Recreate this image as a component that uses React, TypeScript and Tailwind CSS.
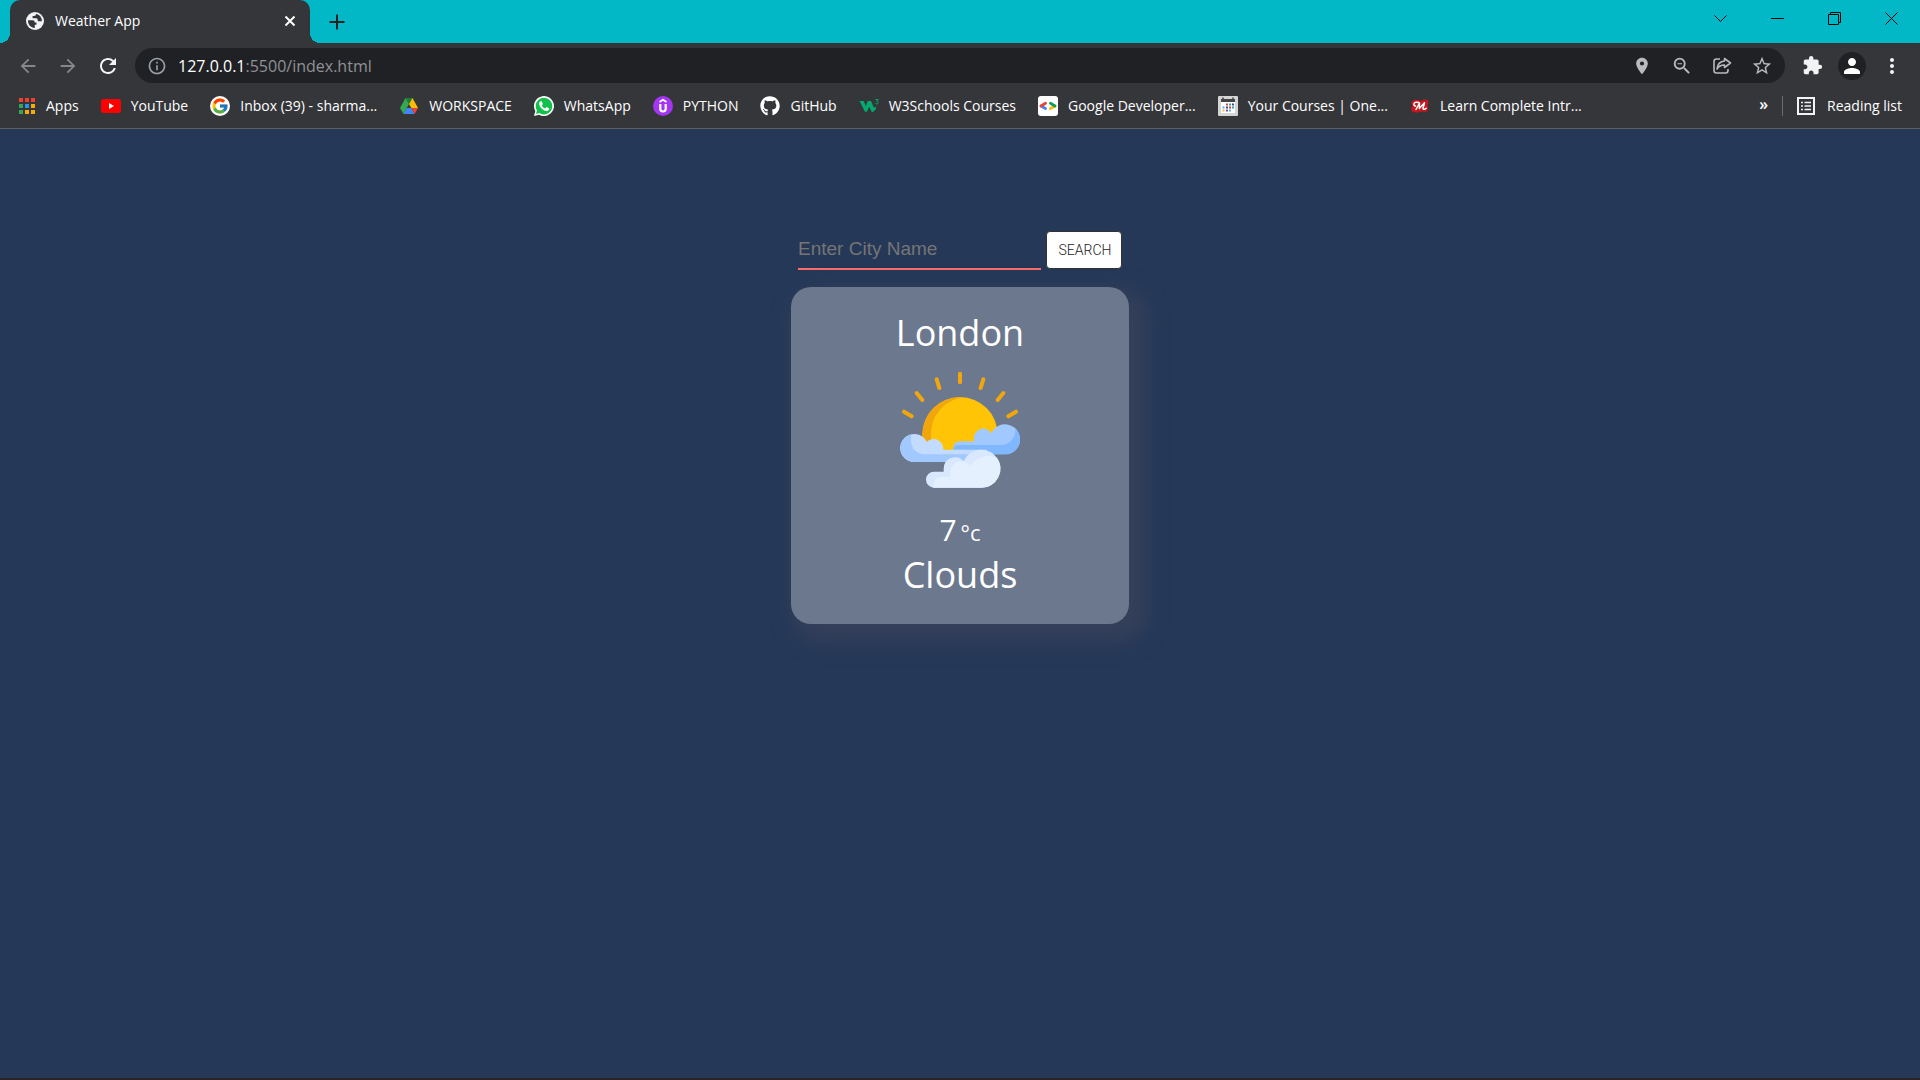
import type { ReactNode } from 'react'
import { FcGoogle } from 'react-icons/fc'
import { FaGithub } from 'react-icons/fa'
import {
  MdArrowBack,
  MdArrowForward,
  MdExtension,
  MdInfoOutline,
  MdLocationOn,
  MdMoreVert,
  MdPerson,
  MdRefresh,
  MdStarBorder,
  MdZoomOut,
} from 'react-icons/md'

const appColors = [
  '#ea4335', '#ea4335', '#ea4335',
  '#34a853', '#2196f3', '#f9ab00',
  '#34a853', '#f9ab00', '#f9ab00',
]

function GlobeIcon() {
  return (
    <svg viewBox="0 0 18 18" className="size-[18px]">
      <circle cx="9" cy="9" r="9" fill="#f1f3f4" />
      <path
        d="M2 8.2h4.5c1.6 0 2.2.9 2.2 2.3h1.8v2.3H8.8V16C4.8 15.7 1.8 12.6 2 8.2Z"
        fill="#35363a"
      />
      <path
        d="M10 2.1c0 1.2-.7 2-2 2H6.6v2.2h3.7c1 0 1.3.7 1.3 1.7 0 .8.6 1.3 1.4 1.3h2.9C16 5.5 13.5 2.6 10 2.1Z"
        fill="#35363a"
      />
    </svg>
  )
}

function AppsIcon() {
  return (
    <svg viewBox="0 0 18 18" className="size-[18px]">
      {appColors.map((color, i) => (
        <rect
          key={i}
          x={1 + (i % 3) * 6}
          y={1 + Math.floor(i / 3) * 6}
          width="4"
          height="4"
          fill={color}
        />
      ))}
    </svg>
  )
}

function YouTubeIcon() {
  return (
    <svg viewBox="0 0 20 20" className="size-5">
      <rect y="3" width="20" height="14" rx="3" fill="#f00" />
      <path d="M8 7v6l5-3Z" fill="#fff" />
    </svg>
  )
}

function GoogleIcon() {
  return (
    <span className="flex size-5 items-center justify-center rounded-full bg-white">
      <FcGoogle size={18} />
    </span>
  )
}

function DriveIcon() {
  return (
    <svg viewBox="0 0 20 20" className="size-5">
      <path d="M6.5 2h7L10 8Z" fill="#188038" />
      <path d="M13.5 2 19 12h-6.7L10 8Z" fill="#fbbc04" />
      <path d="M6.5 2 10 8 4.5 18 1 12Z" fill="#34a853" />
      <path d="M7.7 12h4.6l3.2 6h-11Z" fill="#4285f4" />
      <path d="M12.3 12H19l-3.5 6Z" fill="#ea4335" />
    </svg>
  )
}

function WhatsAppIcon() {
  return (
    <svg viewBox="0 0 20 20" className="size-5">
      <path d="M0 20 1.3 15A10 10 0 1 1 5 18.7Z" fill="#fff" />
      <path d="M2 18 3 14.6A8.3 8.3 0 1 1 5.5 17.1Z" fill="#12c04b" />
      <path
        d="M6.6 5.3c-1.2.6-1.9 2-1.3 3.6 1 2.9 3.6 5.3 6.6 6.1 1.5.3 3.1-.5 3.3-2l-.1-.8-2.6-1.2-1.3 1.5c-1.5-.6-2.7-1.7-3.4-3.1l1.1-1.4-1.2-2.7Z"
        fill="#fff"
      />
    </svg>
  )
}

function UdemyIcon() {
  return (
    <svg viewBox="0 0 20 20" className="size-5">
      <circle cx="10" cy="10" r="10" fill="#a435f0" />
      <path d="M6.5 6 10 3.8 13.5 6" fill="none" stroke="#fff" strokeWidth="1.6" />
      <path d="M7.3 8v4.8a2.7 2.7 0 0 0 5.4 0V8" fill="none" stroke="#fff" strokeWidth="2.2" />
    </svg>
  )
}

function W3Icon() {
  return (
    <svg viewBox="0 0 20 20" className="size-5">
      <path
        d="M.5 5h4.2l2.1 5 2-5H12l3 7 1.3-1.5 1 2-3.2 3.5-1.5-.3-2.3-5-2.5 5H6Z"
        fill="#04aa6d"
      />
      <path
        d="M16.5 3.5h2.7l-1.5 1.9c2 0 1.8 2.6 0 2.6-.7 0-1.2-.3-1.3-.9"
        fill="none"
        stroke="#04aa6d"
      />
    </svg>
  )
}

function DevelopersIcon() {
  return (
    <svg viewBox="0 0 20 20" className="size-5">
      <rect width="20" height="20" rx="3" fill="#fff" />
      <g fill="none" strokeWidth="2.8" strokeLinecap="round">
        <path d="M3 10 7.5 12.5" stroke="#4285f4" />
        <path d="M3 10 7.5 7.3" stroke="#ea4335" />
        <path d="M17 10 12.5 12.5" stroke="#fbbc04" />
        <path d="M17 10 12.5 7.3" stroke="#0f9d58" />
      </g>
    </svg>
  )
}

function CalendarIcon() {
  return (
    <svg viewBox="0 0 20 20" className="size-5">
      <rect width="20" height="20" rx="1" fill="#d4d4d4" />
      <rect x="3" y="3" width="14" height="14" fill="#fff" />
      <path d="M3 3h14v3H3Z" fill="#444" />
      <path d="M5 1.5V4M15 1.5V4" stroke="#444" strokeWidth="1.5" />
      <path d="M8 8.5h2M11 11.5h2" stroke="#e0433a" strokeWidth="2" />
      <path d="M11 8.5h2M14 11.5h2" stroke="#2a9db5" strokeWidth="2" />
      <path d="M14 8.5h2M8 11.5h2" stroke="#34508c" strokeWidth="2" />
      <path d="M4.5 11.5h2M11 14.5h2" stroke="#4bb4e6" strokeWidth="2" />
      <path d="M4.5 14.5h2" stroke="#f2b632" strokeWidth="2" />
      <path d="M8 14.5h2" stroke="#8e44ad" strokeWidth="2" />
    </svg>
  )
}

function MasterIcon() {
  return (
    <svg viewBox="0 0 20 20" className="size-5">
      <path
        d="M4 4h5l2 1 3-1.5 3.5.5 1.2 2-1.2 3 .8 4-2 3-3.5-.5L10 16l-3.5.7L2 15.5l-1-3 1.5-3L1 7Z"
        fill="#c4161c"
      />
      <path
        d="M5.5 10C3 9.5 3.5 6.5 6 6.3c1.5-.1 3 .2 3.5.7L6 13.5M9.5 7 9.3 12.5 14.5 6.8 13 12.3c0 1.4 1.8 1.3 3.2 0"
        fill="none"
        stroke="#fff"
        strokeWidth="1.5"
        strokeLinecap="round"
        strokeLinejoin="round"
      />
    </svg>
  )
}

function ShareIcon() {
  return (
    <svg
      viewBox="0 0 20 20"
      className="size-5"
      fill="none"
      stroke="currentColor"
      strokeWidth="1.6"
      strokeLinejoin="round"
    >
      <path d="M8 3H4.5A2.5 2.5 0 0 0 2 5.5v9A2.5 2.5 0 0 0 4.5 17h9a2.5 2.5 0 0 0 2.5-2.5V13" />
      <path d="M12.5 2.5 18.5 7l-6 4.5V9C9 9 6.8 10 5 13c.4-4.5 3-7.5 7.5-8Z" />
    </svg>
  )
}

function ReadingListIcon() {
  return (
    <svg viewBox="0 0 18 18" className="size-[18px]" fill="none" stroke="#f1f3f4">
      <rect x="1" y="1" width="16" height="16" strokeWidth="2" />
      <path
        d="M4 5.5h2M4 9h2M4 12.5h2M7.5 5.5H14M7.5 9H14M7.5 12.5H14"
        strokeWidth="1.5"
      />
    </svg>
  )
}

const bookmarks = [
  { label: 'Apps', icon: <AppsIcon /> },
  { label: 'YouTube', icon: <YouTubeIcon /> },
  { label: 'Inbox (39) - sharma...', icon: <GoogleIcon /> },
  { label: 'WORKSPACE', icon: <DriveIcon /> },
  { label: 'WhatsApp', icon: <WhatsAppIcon /> },
  { label: 'PYTHON', icon: <UdemyIcon /> },
  { label: 'GitHub', icon: <FaGithub size={20} /> },
  { label: 'W3Schools Courses', icon: <W3Icon /> },
  { label: 'Google Developer...', icon: <DevelopersIcon /> },
  { label: 'Your Courses | One...', icon: <CalendarIcon /> },
  { label: 'Learn Complete Intr...', icon: <MasterIcon /> },
]

const windowButtons = [
  { label: 'Search tabs', path: 'M.5 3.5l6 6 6-6' },
  { label: 'Minimize', path: 'M0 6.5h13' },
  { label: 'Restore', path: 'M.5 2.5h10v10H.5ZM2.5 2.5v-2h10v10h-2' },
  { label: 'Close', path: 'M.5.5l12 12M12.5.5l-12 12' },
]

function IconButton({ label, className = '', children }: {
  label: string
  className?: string
  children: ReactNode
}) {
  return (
    <button
      type="button"
      aria-label={label}
      className={`flex h-9 w-10 shrink-0 items-center justify-center ${className}`}
    >
      {children}
    </button>
  )
}

function TitleBar() {
  return (
    <div className="flex h-[43px] items-end justify-between bg-[#02b8c6]">
      <div className="flex items-end">
        <span className="size-2.5 bg-[radial-gradient(circle_at_top_left,transparent_10px,#35363a_10px)]" />
        <div className="flex h-[43px] w-[300px] items-center gap-[11px] rounded-t-[10px] bg-[#35363a] pb-0.5 pl-4 pr-3 text-sm text-white">
          <GlobeIcon />
          <span className="flex-1">Weather App</span>
          <button type="button" aria-label="Close tab">
            <svg viewBox="0 0 16 16" className="size-4" stroke="currentColor" strokeWidth="2">
              <path d="M3.5 3.5l9 9M12.5 3.5l-9 9" />
            </svg>
          </button>
        </div>
        <span className="size-2.5 bg-[radial-gradient(circle_at_top_right,transparent_10px,#35363a_10px)]" />
        <button
          type="button"
          aria-label="New tab"
          className="flex h-[43px] w-[34px] items-center justify-center text-[#202124]"
        >
          <svg viewBox="0 0 16 16" className="size-4" stroke="currentColor" strokeWidth="2">
            <path d="M8 .5v15M.5 8h15" />
          </svg>
        </button>
      </div>
      <div className="flex self-start">
        {windowButtons.map(({ label, path }) => (
          <button
            key={label}
            type="button"
            aria-label={label}
            className="flex h-[37px] w-[57px] items-center justify-center text-black"
          >
            <svg viewBox="0 0 13 13" className="size-[13px]" fill="none" stroke="currentColor">
              <path d={path} />
            </svg>
          </button>
        ))}
      </div>
    </div>
  )
}

function Toolbar() {
  return (
    <div className="flex h-[45px] items-center px-2 text-[#f1f3f4]">
      <IconButton label="Back" className="text-[#86878a]">
        <MdArrowBack size={22} />
      </IconButton>
      <IconButton label="Forward" className="text-[#86878a]">
        <MdArrowForward size={22} />
      </IconButton>
      <IconButton label="Reload">
        <MdRefresh size={24} />
      </IconButton>
      <div className="mx-[7px] flex h-[35px] flex-1 items-center rounded-full bg-[#202124] pl-3 pr-[3px] text-[#b9babc]">
        <MdInfoOutline size={20} className="text-[#9aa0a6]" />
        <p className="ml-[11px] flex-1 text-base text-[#8f9296]">
          <span className="text-white">127.0.0.1</span>:5500/index.html
        </p>
        <IconButton label="Location">
          <MdLocationOn size={20} />
        </IconButton>
        <IconButton label="Zoom out">
          <MdZoomOut size={22} />
        </IconButton>
        <IconButton label="Share">
          <ShareIcon />
        </IconButton>
        <IconButton label="Bookmark this tab">
          <MdStarBorder size={22} />
        </IconButton>
      </div>
      <IconButton label="Extensions">
        <MdExtension size={21} />
      </IconButton>
      <IconButton label="Profile">
        <span className="flex size-7 items-center justify-center rounded-full bg-[#202124] text-white">
          <MdPerson size={24} />
        </span>
      </IconButton>
      <IconButton label="Menu">
        <MdMoreVert size={24} />
      </IconButton>
    </div>
  )
}

function BookmarksBar() {
  return (
    <nav className="flex h-9 items-center px-[18px] text-sm text-white">
      <ul className="flex flex-1 items-center gap-[22px]">
        {bookmarks.map(({ label, icon }) => (
          <li key={label}>
            <a href="#" className="flex items-center gap-2.5 whitespace-nowrap">
              {icon}
              {label}
            </a>
          </li>
        ))}
      </ul>
      <button type="button" aria-label="More bookmarks" className="mr-3.5 pb-1 text-base leading-5 font-semibold">
        »
      </button>
      <span className="mr-3.5 h-5 w-px bg-[#6b6c6f]" />
      <button type="button" className="flex items-center gap-3">
        <ReadingListIcon />
        Reading list
      </button>
    </nav>
  )
}

function PartlyCloudyIcon() {
  return (
    <svg viewBox="360 60 360 360" className="size-[120px]">
      <g stroke="#f0a60c" strokeWidth="12" strokeLinecap="round">
        <path d="M540 71v26M470 88l8 26M610 88l-8 26M410 129l17 21M670 129l-17 21M372 185l23 14M708 185l-23 14" />
      </g>
      <path d="M427 254a113 113 0 0 1 226 0l-20 50H440Z" fill="#ffc405" />
      <path d="M552 142C500 148 453 190 453 254V285H430C414 215 462 136 552 142Z" fill="#f0a60c" />
      {/* right cloud */}
      <path
        d="M520 300V292Q522 274 540 274H582V268A28 28 0 0 1 634 250A45 45 0 1 1 675 313H520Z"
        fill="#a1c9ff"
      />
      <path
        d="M520 300C520 290 525 285 535 285H662C692 285 710 258 705 234A45 45 0 0 1 675 313H520Z"
        fill="#80b8ff"
      />
      {/* left cloud */}
      <path
        d="M402 336A42 42 0 1 1 440 275C462 257 490 270 490 299H620V336Z"
        fill="#c3dbff"
      />
      <path
        d="M402 336A42 42 0 0 1 394 253C388 292 405 313 440 313H600V336Z"
        fill="#a1c9ff"
      />
      {/* front cloud */}
      <path
        d="M462 413A24 24 0 0 1 462 365H491V357A34 34 0 0 1 551 334A57 57 0 1 1 605 413Z"
        fill="#dae8ff"
      />
      <path
        d="M459 413C459 395 468 381 485 381H511V375A34 34 0 0 1 571 347C588 322 620 310 651 323A57 57 0 0 1 605 413Z"
        fill="#e5f0ff"
      />
    </svg>
  )
}

export default function App() {
  return (
    <div className="flex min-h-screen flex-col bg-[#253858] font-['Open_Sans','Noto_Sans',sans-serif]">
      <header className="border-b border-[#5f6063] bg-[#35363a] pb-1">
        <TitleBar />
        <Toolbar />
        <BookmarksBar />
      </header>

      <main className="flex flex-1 flex-col items-center border-b-2 border-[#2a2223] pt-[102px] text-white">
        <form className="flex items-start gap-[5px]" onSubmit={(e) => e.preventDefault()}>
          <input
            type="text"
            aria-label="City name"
            placeholder="Enter City Name"
            className="h-[39px] w-[243px] border-b-2 border-[#ff6b6b] bg-transparent pb-0.5 font-['Liberation_Sans',sans-serif] text-[19px] outline-none placeholder:text-[#757575]"
          />
          <button
            type="submit"
            className="h-[38px] w-[76px] rounded border border-[#333] bg-white pl-0.5 font-[Roboto,sans-serif] text-sm font-light text-[#222]"
          >
            SEARCH
          </button>
        </form>

        <section className="mt-[17px] flex h-[337px] w-[338px] flex-col items-center rounded-[20px] bg-[#6c788d] pt-[19px] shadow-[10px_10px_20px_8px_#35405a]">
          <h1 className="text-4xl leading-[54px]">London</h1>
          <div className="mt-2.5">
            <PartlyCloudyIcon />
          </div>
          <p className="mt-5 flex h-10 items-baseline gap-1 text-3xl leading-10">
            7<span className="text-[22px] leading-6">°c</span>
          </p>
          <h2 className="text-4xl leading-[50px]">Clouds</h2>
        </section>
      </main>
    </div>
  )
}
